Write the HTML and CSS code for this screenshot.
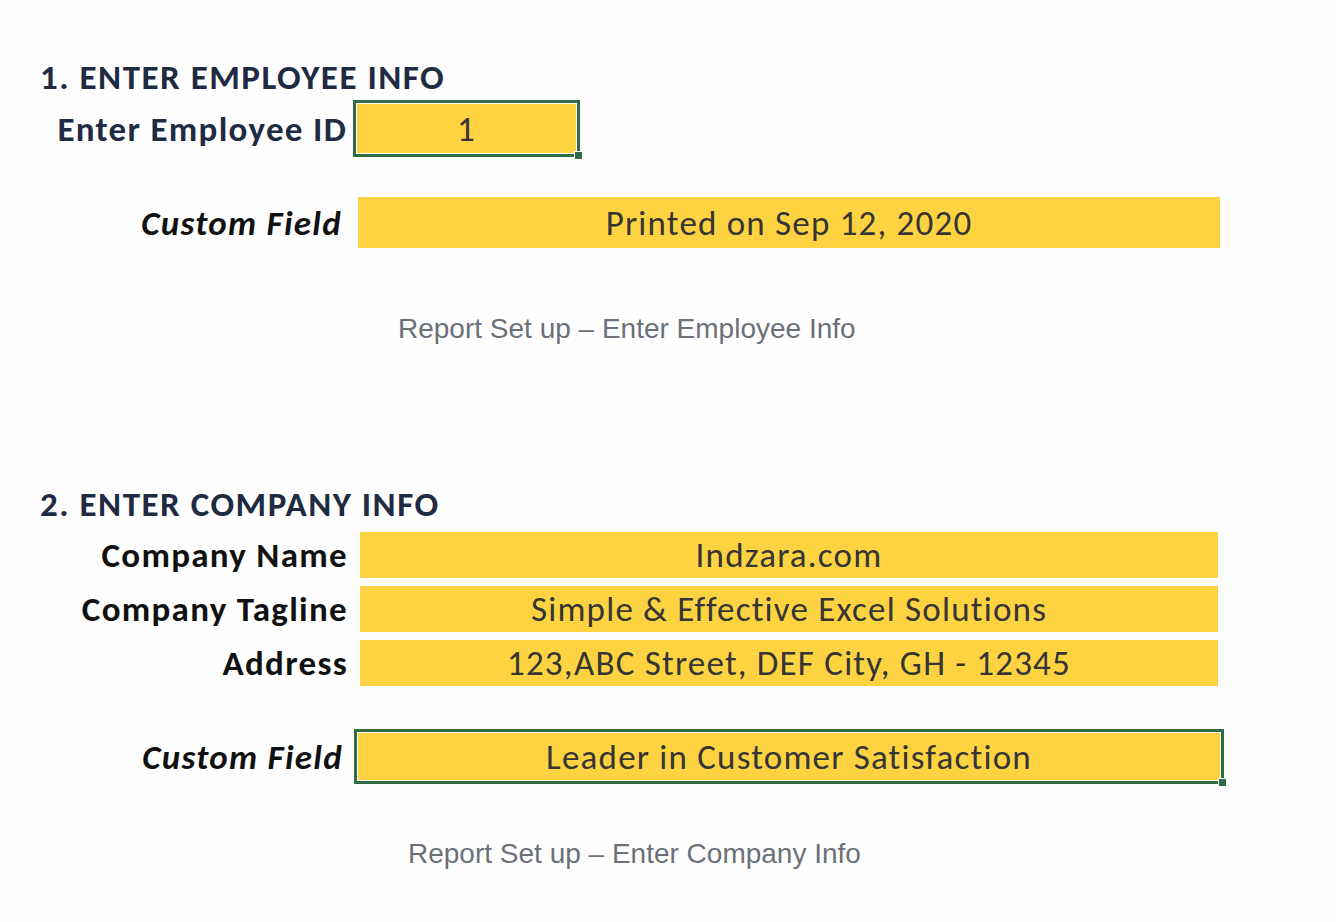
FILE: index.html
```html
<!DOCTYPE html>
<html lang="en">
<head>
<meta charset="utf-8">
<title>Report Set up</title>
<link rel="stylesheet" href="styles.css">
</head>
<body>
<main class="page">
  <figure class="shot shot-employee">
    <div class="sheet">
      <h2 class="sheet-title">1. ENTER EMPLOYEE INFO</h2>
      <div class="row row-id">
        <div class="label label-navy label-id">Enter Employee ID</div>
        <div class="cell cell-selected cell-id">1<span class="handle"></span></div>
      </div>
      <div class="row row-custom1">
        <div class="label label-italic label-custom1">Custom Field</div>
        <div class="cell cell-custom1">Printed on Sep 12, 2020</div>
      </div>
    </div>
    <figcaption class="caption caption-1">Report Set up – Enter Employee Info</figcaption>
  </figure>

  <figure class="shot shot-company">
    <div class="sheet">
      <h2 class="sheet-title">2. ENTER COMPANY INFO</h2>
      <div class="rows">
        <div class="row row-company">
          <div class="label label-company">Company Name</div>
          <div class="cell cell-company">Indzara.com</div>
        </div>
        <div class="row row-company">
          <div class="label label-company">Company Tagline</div>
          <div class="cell cell-company">Simple &amp; Effective Excel Solutions</div>
        </div>
        <div class="row row-company">
          <div class="label label-company">Address</div>
          <div class="cell cell-company">123,ABC Street, DEF City, GH - 12345</div>
        </div>
      </div>
      <div class="row row-custom2">
        <div class="label label-italic label-custom2">Custom Field</div>
        <div class="cell cell-selected cell-custom2">Leader in Customer Satisfaction<span class="handle"></span></div>
      </div>
    </div>
    <figcaption class="caption caption-2">Report Set up – Enter Company Info</figcaption>
  </figure>
</main>
</body>
</html>
```

FILE: styles.css
```css
* { box-sizing: border-box; }
html, body { margin: 0; padding: 0; background: #fefefe; }
body {
  width: 1336px;
  height: 922px;
  overflow: hidden;
  font-family: Carlito, Calibri, Lato, "Liberation Sans", sans-serif;
}
.page {
  display: flex;
  flex-direction: column;
}
.shot { margin: 0; }
.sheet {
  display: flex;
  flex-direction: column;
}
.sheet-title {
  margin: 0;
  padding-left: 40px;
  font-size: 35px;
  line-height: 36px;
  font-weight: 700;
  color: #1e2b42;
  letter-spacing: 1.5px;
}
.shot-employee .sheet-title { margin-top: 59px; }
.shot-company .sheet-title { margin-top: 0; }

.row {
  display: flex;
  align-items: center;
}
.label {
  text-align: right;
  font-size: 35px;
  line-height: 42px;
  font-weight: 700;
  letter-spacing: 1.3px;
  color: #111;
  white-space: nowrap;
}
.label-navy { color: #1e2b42; }
.label-italic { font-style: italic; }

.cell {
  position: relative;
  background: #fdd341;
  color: #353535;
  font-size: 35px;
  letter-spacing: 1.2px;
  text-align: center;
  display: flex;
  align-items: center;
  justify-content: center;
  white-space: nowrap;
}
.cell-selected {
  border: 3px solid #2f6b45;
  box-shadow: inset 0 0 0 1px #fff;
}
.handle {
  position: absolute;
  width: 9px;
  height: 9px;
  background: #2f6b45;
  border: 1px solid #fff;
  right: -6px;
  bottom: -6px;
}

.row-id { margin-top: 5px; }
.label-id { width: 347px; }
.cell-id { margin-left: 6px; width: 227px; height: 57px; }

.row-custom1 { margin-top: 40px; }
.label-custom1 { width: 342px; }
.cell-custom1 { margin-left: 16px; width: 862px; height: 51px; }

.caption {
  margin: 0;
  font-family: "Liberation Sans", Arial, sans-serif;
  font-size: 28px;
  line-height: 30px;
  color: #6b7079;
}
.caption-1 { margin-top: 66px; padding-left: 398px; }
.caption-2 { margin-top: 55px; padding-left: 408px; }

.shot-company { margin-top: 142px; }

.rows {
  display: flex;
  flex-direction: column;
  gap: 8px;
  margin-top: 10px;
}
.label-company { width: 348px; }
.cell-company { margin-left: 12px; width: 858px; height: 46px; }

.row-custom2 { margin-top: 43px; }
.label-custom2 { width: 343px; }
.cell-custom2 { margin-left: 11px; width: 870px; height: 55px; }
```
